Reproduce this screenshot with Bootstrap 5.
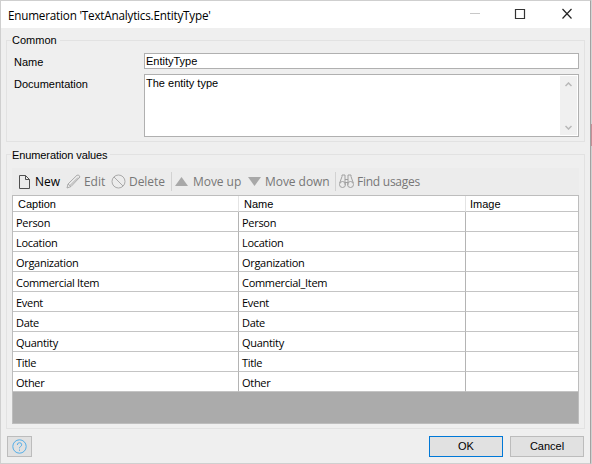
<!DOCTYPE html>
<html lang="en">
<head>
<meta charset="utf-8">
<title>Enumeration 'TextAnalytics.EntityType'</title>
<link href="https://cdn.jsdelivr.net/npm/bootstrap@5.3.0/dist/css/bootstrap.min.css" rel="stylesheet">
<style>
html,body{width:592px;height:464px;overflow:hidden}
body{background:#d0d0d0;font:11px/14px "Liberation Sans",Arial,sans-serif;color:#000}
svg{display:block;flex:none}
.dialog{width:591px;height:464px;background:#efefef;border:1px solid #cfcfcf;border-right:1px solid #a2a2a2}
.edge{width:1px;background:linear-gradient(#d4d4d4 0 124px,#c58f96 124px 146px,#d0d0d0 146px)}
.segoe{font-family:"Open Sans","Noto Sans",sans-serif}
.titlebar{height:27px;background:#fff;padding-left:7px;font-size:11.7px;letter-spacing:-.2px}
.group{margin:0 5px;border:1px solid #e2e2e2;padding:0 5px}
.group-common{margin-top:12px;height:102px}
.group-values{margin-top:12px;height:275px}
.legend-text{background:#efefef;margin:-7px 0 0 -1px;padding:0 3px 0 1px;height:14px;width:max-content}
.group-common .legend-text{margin-top:-8px}
.group-values .legend-text{letter-spacing:-.1px}
.field-label{width:132px;padding-left:2px}
.label-name{padding-top:2px}
.label-doc{padding-top:3px}
.row-name{margin-top:6px}
.row-doc{margin-top:5px}
.field{border:1px solid #b0b0b0;background:#fff;border-radius:0;width:435px}
.field-name{height:16px;padding:0 1px}
.field-doc{height:63px;padding:1px 1px}
.scroller{width:17px;background:#f0f0f0;padding:6px 0 5px}
.tools{height:27px;background:#ececec;margin-top:6px;padding-left:6px;font-size:12px;color:#777}
.tools span{letter-spacing:-.05px}
.tools .sep{width:1px;height:19px;background:#d2d2d2}
.grid-box{height:229px;width:567px;background:#ababab;border:1px solid #bdbdbd}
.grid-table{width:565px;table-layout:fixed;margin:0;border-collapse:separate;border-spacing:0;color:#000}
.grid-table th{height:16px;padding:0 0 0 5px;font-weight:400;line-height:14px;background:#fff;border-bottom:1px solid #c4c4c4;border-right:1px solid #e4e4e4}
.grid-table th:last-child{padding-left:4px}
.grid-table td{height:20px;padding:2px 0 0 3px;font:11px/17px "Open Sans","Noto Sans",sans-serif;letter-spacing:-.3px;background:#fff;border-bottom:1px solid #c4c4c4;border-right:1px solid #b4b4b4}
.grid-table tr>:last-child{border-right:0}
.footer{margin-top:7px;padding:0 6px 0 6px}
.dlg-btn{width:74px;height:21px;border:1px solid #bcbcbc;border-radius:0;background:#e1e1e1;padding:0;font-size:11px;line-height:17px;color:#000}
.dlg-btn.ok{border-color:#0078d7}
.dlg-btn.help{width:25px}
</style>
<script src="https://cdn.jsdelivr.net/npm/bootstrap@5.3.0/dist/js/bootstrap.bundle.min.js"></script>
</head>
<body class="d-flex">
<div class="dialog d-flex flex-column flex-shrink-0">
  <header class="titlebar segoe d-flex align-items-center">
    <span class="me-auto">Enumeration 'TextAnalytics.EntityType'</span>
    <svg width="120" height="27" fill="none"><path d="M0 12.500h10" stroke="#c8c8c8"/><path d="M45.500 8.500h9v9h-9z" stroke="#333" stroke-width="1.200"/><path d="M92.500 8l9 9.500M101.500 8l-9 9.500" stroke="#222" stroke-width="1.200"/></svg>
  </header>

  <section class="group group-common">
    <div class="legend-text">Common</div>
    <div class="d-flex row-name">
      <label class="field-label label-name">Name</label>
      <div class="field field-name">EntityType</div>
    </div>
    <div class="d-flex row-doc">
      <label class="field-label label-doc">Documentation</label>
      <div class="field field-doc d-flex"><span class="me-auto">The entity type</span>
        <div class="scroller d-flex flex-column justify-content-between align-items-center">
          <svg width="7" height="5" fill="none" stroke="#b8b8b8" stroke-width="1.500"><path d="M.5 4l3-3 3 3"/></svg>
          <svg width="7" height="5" fill="none" stroke="#b8b8b8" stroke-width="1.500"><path d="M.5 1l3 3 3-3"/></svg>
        </div>
      </div>
    </div>
  </section>

  <section class="group group-values">
    <div class="legend-text">Enumeration values</div>
    <div class="tools segoe d-flex align-items-center">
      <svg width="13" height="15" fill="none" stroke="#505050"><path d="M1.500 1.500h6l4 4v9h-10zM7.500 1.500v4h4"/></svg>
      <span class="text-black" style="margin-left:4px;width:31px">New</span>
      <svg width="15" height="15" fill="none" stroke="#aaa"><path d="M1 14l1-4L11 1.200q2-1 3 1.800L5 12.500zM2 10l3 2.500M4 11.500l8-8"/></svg>
      <span style="margin-left:3px;width:27px">Edit</span>
      <svg width="15" height="15" fill="none" stroke="#aaa"><circle cx="7.500" cy="7.500" r="6.500"/><path d="M3 3l9 9"/></svg>
      <span style="margin-left:3px;width:42px">Delete</span>
      <i class="sep"></i>
      <svg style="margin-left:3px" width="13" height="9" fill="#a8a8a8"><path d="M0 9L6.500 0 13 9z"/></svg>
      <span style="margin-left:5px;width:55px">Move up</span>
      <svg width="13" height="9" fill="#a8a8a8"><path d="M0 0h13L6.500 9z"/></svg>
      <span style="margin-left:4px;width:70px">Move down</span>
      <i class="sep"></i>
      <svg style="margin-left:3px" width="15" height="15" fill="none" stroke="#a0a0a0"><circle cx="3.500" cy="10.500" r="3"/><circle cx="11.500" cy="10.500" r="3"/><path d="M.7 9L3 2.500V1h3v10M14.300 9L12 2.500V1H9v10M6 5.500h3M6 8.500h3"/></svg>
      <span style="margin-left:3px;letter-spacing:-.25px">Find usages</span>
    </div>
    <div class="grid-box">
      <table class="grid-table">
        <colgroup><col style="width:226px"><col style="width:227px"><col></colgroup>
        <thead><tr><th>Caption</th><th>Name</th><th>Image</th></tr></thead>
        <tbody>
          <tr><td>Person</td><td>Person</td><td></td></tr>
          <tr><td>Location</td><td>Location</td><td></td></tr>
          <tr><td>Organization</td><td>Organization</td><td></td></tr>
          <tr><td>Commercial Item</td><td>Commercial_Item</td><td></td></tr>
          <tr><td>Event</td><td>Event</td><td></td></tr>
          <tr><td>Date</td><td>Date</td><td></td></tr>
          <tr><td>Quantity</td><td>Quantity</td><td></td></tr>
          <tr><td>Title</td><td>Title</td><td></td></tr>
          <tr><td>Other</td><td>Other</td><td></td></tr>
        </tbody>
      </table>
    </div>
  </section>

  <footer class="footer d-flex">
    <button class="btn dlg-btn help d-flex align-items-center justify-content-center me-auto" aria-label="Help">
      <svg width="15" height="15" fill="none" stroke="#55aee8"><circle cx="7.500" cy="7.500" r="6.700"/><path d="M5.300 6q0-2.300 2.200-2.300T9.700 5.800q0 1.200-1.200 1.700-1 .5-1 1.800M7.500 10.500v1.300"/></svg>
    </button>
    <button class="btn dlg-btn ok">OK</button>
    <button class="btn dlg-btn" style="margin-left:7px">Cancel</button>
  </footer>
</div>
<div class="edge"></div>
</body>
</html>
